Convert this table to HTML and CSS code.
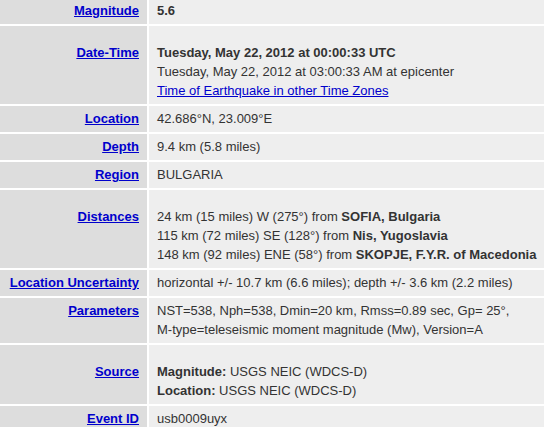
FILE: index.html
```html
<!DOCTYPE html>
<html lang="en">
<head>
<meta charset="utf-8">
<title>Earthquake Details</title>
<link rel="stylesheet" href="styles.css">
</head>
<body>
<table class="details">
  <tr>
    <th class="label"><a href="#">Magnitude</a></th>
    <td class="value"><strong>5.6</strong></td>
  </tr>
  <tr>
    <th class="label"><a href="#">Date-Time</a></th>
    <td class="value spaced">
      <strong>Tuesday, May 22, 2012 at 00:00:33 UTC</strong><br>
      Tuesday, May 22, 2012 at 03:00:33 AM at epicenter<br>
      <a href="#" class="plain">Time of Earthquake in other Time Zones</a>
    </td>
  </tr>
  <tr>
    <th class="label"><a href="#">Location</a></th>
    <td class="value">42.686°N, 23.009°E</td>
  </tr>
  <tr>
    <th class="label"><a href="#">Depth</a></th>
    <td class="value">9.4 km (5.8 miles)</td>
  </tr>
  <tr>
    <th class="label"><a href="#">Region</a></th>
    <td class="value">BULGARIA</td>
  </tr>
  <tr>
    <th class="label"><a href="#">Distances</a></th>
    <td class="value spaced">
      24 km (15 miles) W (275°) from <strong>SOFIA, Bulgaria</strong><br>
      115 km (72 miles) SE (128°) from <strong>Nis, Yugoslavia</strong><br>
      148 km (92 miles) ENE (58°) from <strong>SKOPJE, F.Y.R. of Macedonia</strong>
    </td>
  </tr>
  <tr>
    <th class="label"><a href="#">Location Uncertainty</a></th>
    <td class="value">horizontal +/- 10.7 km (6.6 miles); depth +/- 3.6 km (2.2 miles)</td>
  </tr>
  <tr>
    <th class="label"><a href="#">Parameters</a></th>
    <td class="value">NST=538, Nph=538, Dmin=20 km, Rmss=0.89 sec, Gp= 25°,<br>
      M-type=teleseismic moment magnitude (Mw), Version=A</td>
  </tr>
  <tr>
    <th class="label"><a href="#">Source</a></th>
    <td class="value spaced">
      <strong>Magnitude:</strong> USGS NEIC (WDCS-D)<br>
      <strong>Location:</strong> USGS NEIC (WDCS-D)
    </td>
  </tr>
  <tr>
    <th class="label"><a href="#">Event ID</a></th>
    <td class="value">usb0009uyx</td>
  </tr>
</table>
</body>
</html>
```
FILE: styles.css
```css
html, body {
  margin: 0;
  padding: 0;
  overflow: hidden;
  background: #ffffff;
}

body {
  font-family: "Liberation Sans", Arial, sans-serif;
  font-size: 13px;
  line-height: 19px;
  color: #333333;
}

.details {
  border-collapse: separate;
  border-spacing: 2px;
  margin: -4px 0 0 -2px;
  min-width: 560px;
}

.details th,
.details td {
  vertical-align: baseline;
  padding: 3px 8px 4px 8px;
}

.label {
  width: 131px;
  background: #dddddd;
  text-align: right;
  white-space: nowrap;
  font-weight: bold;
}

.label a {
  color: #0000cc;
  text-decoration: underline;
}

.value {
  background: #eeeeee;
  text-align: left;
  white-space: nowrap;
}

.value.spaced {
  padding-top: 17px;
}

.value strong {
  font-weight: bold;
}

.value a.plain {
  color: #0000cc;
  text-decoration: underline;
}
```
